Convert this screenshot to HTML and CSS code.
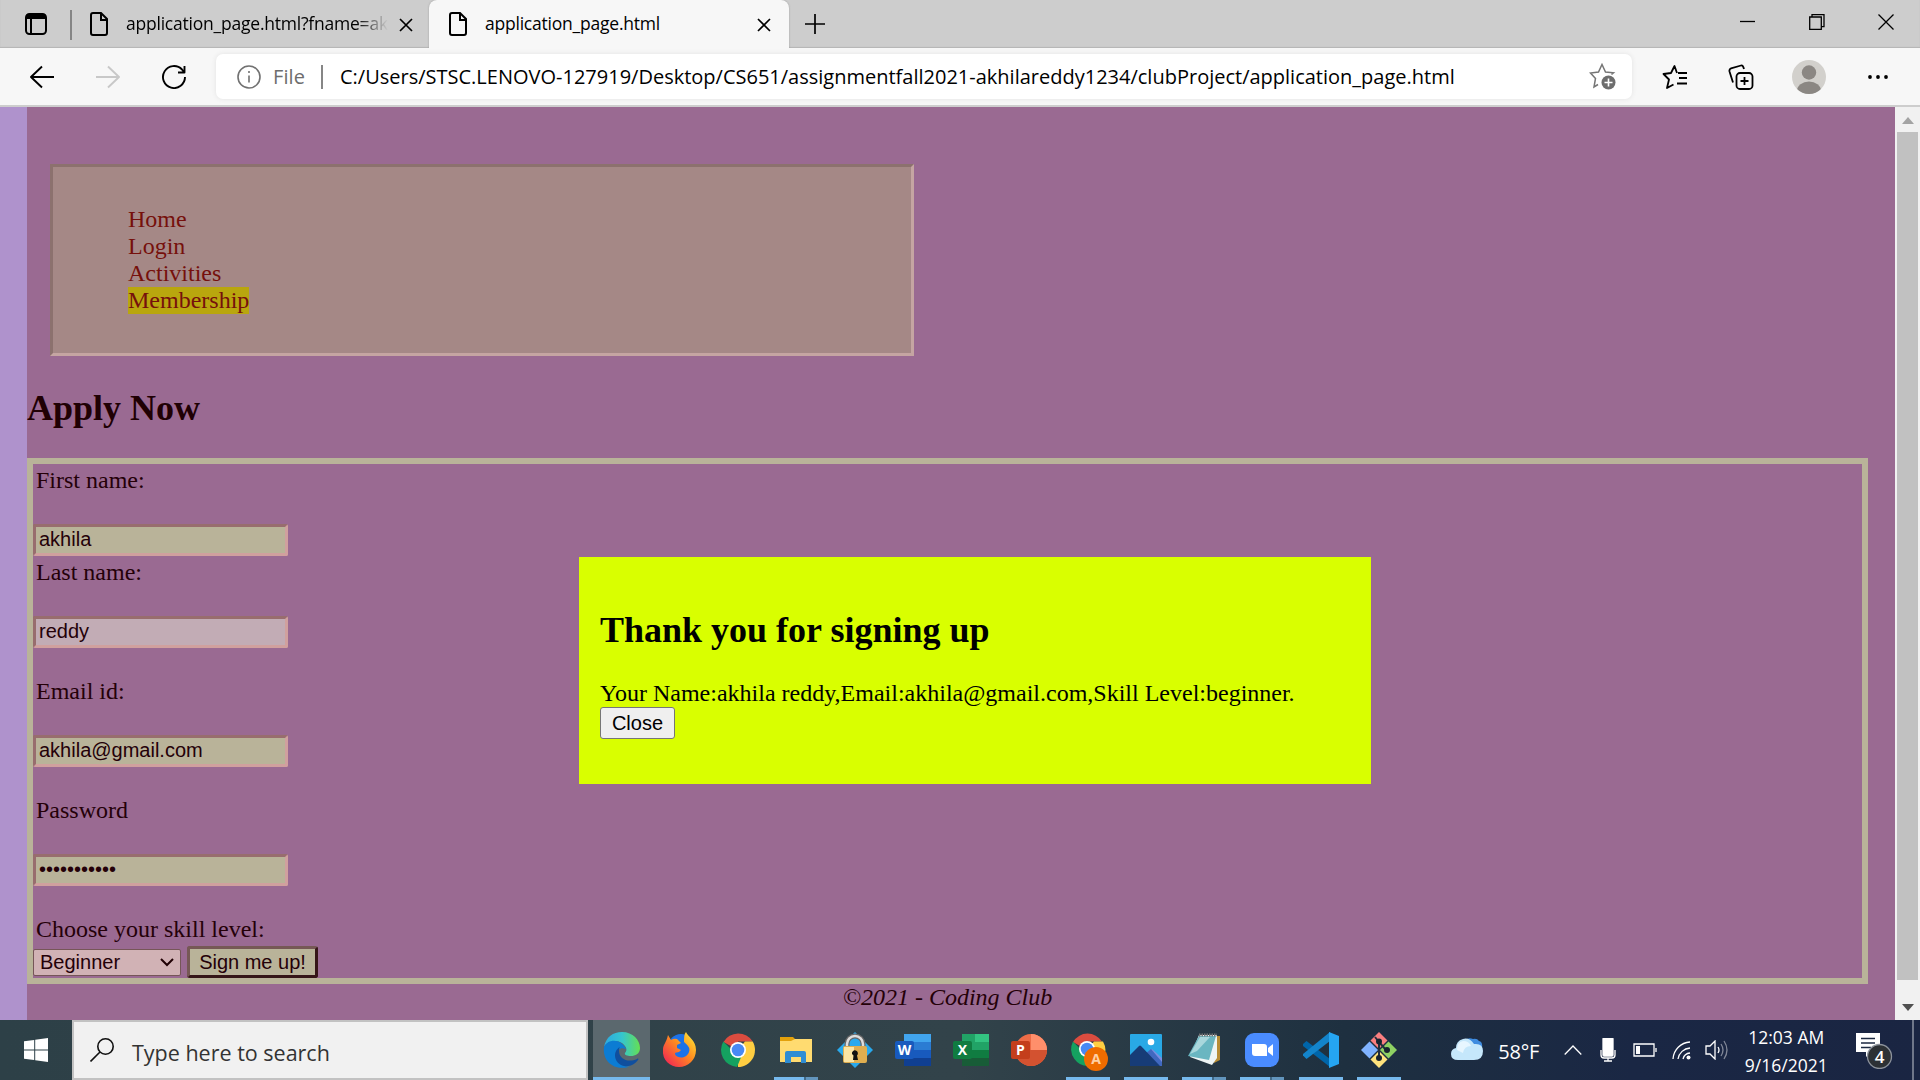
FILE: index.html
```html
<!DOCTYPE html>
<html lang="en">
<head>
<meta charset="utf-8">
<title>application_page.html</title>
<link rel="stylesheet" href="styles.css">
</head>
<body>
<header class="tabs">
  <svg class="panel-icon" width="22" height="22" viewBox="0 0 22 22"><rect x="1" y="1" width="20" height="20" rx="3.5" fill="none" stroke="#000" stroke-width="2"/><path d="M1 6V4a3 3 0 0 1 3-3h14a3 3 0 0 1 3 3v2z"/><path d="M6 5v16" stroke="#000" stroke-width="2"/></svg>
  <span class="tab-divider"></span>
  <div class="tab tab-back">
    <svg class="doc" viewBox="0 0 18 24"><path d="M3 1h8l6 6v14q0 2-2 2H3q-2 0-2-2V3q0-2 2-2zM11 1v7h6"/></svg>
    <span class="tab-title faded">application_page.html?fname=ak</span>
    <svg class="x" viewBox="0 0 14 14"><path d="M1 1l12 12M13 1L1 13"/></svg>
  </div>
  <div class="tab tab-active">
    <svg class="doc" viewBox="0 0 18 24"><path d="M3 1h8l6 6v14q0 2-2 2H3q-2 0-2-2V3q0-2 2-2zM11 1v7h6"/></svg>
    <span class="tab-title">application_page.html</span>
    <svg class="x" viewBox="0 0 14 14"><path d="M1 1l12 12M13 1L1 13"/></svg>
  </div>
  <svg class="plus" viewBox="0 0 22 22"><path d="M11 1v20M1 11h20"/></svg>
  <div class="window-controls">
    <svg viewBox="0 0 16 16"><path d="M0 7.500h15"/></svg>
    <svg viewBox="0 0 16 16"><path d="M.7 3h11.600v12.300H.7zM3 3V.7h12v12h-2.500"/></svg>
    <svg viewBox="0 0 16 16"><path d="M.5.5l15 15M15.500.5l-15 15"/></svg>
  </div>
</header>
<div class="toolbar">
  <div class="nav-buttons">
    <svg viewBox="0 0 24 24"><path d="M24 12H1M12 1.500L1 12l11 10.500"/></svg>
    <svg class="disabled" viewBox="0 0 24 24"><path d="M0 12h23M12 1.500L23 12 12 22.500"/></svg>
    <svg viewBox="0 0 24 24"><path d="M23 12A11 11 0 1 1 20 4.500l2 2.500M22.500 1v6.500H16"/></svg>
  </div>
  <div class="address">
    <svg class="info" viewBox="0 0 24 24"><circle cx="12" cy="12" r="11"/><path d="M12 10.500v7M12 6v2"/></svg>
    <span class="scheme">File</span><span class="address-divider"></span>
    <span class="url">C:/Users/STSC.LENOVO-127919/Desktop/CS651/assignmentfall2021-akhilareddy1234/clubProject/application_page.html</span>
    <svg class="add-star" viewBox="0 0 27 27"><path d="M9 21.500L5 24l1.500-8.500L1.500 10l8-1L13 1.500 16.500 9l8 .8-2 1.700"/><circle class="badge" cx="19.500" cy="19.500" r="7"/><path class="badge-plus" d="M19.500 15.500v8M15.500 19.500h8"/></svg>
  </div>
  <div class="tools">
    <svg viewBox="0 0 26 26"><path d="M15 9L12.500 2 9 9l-7.500 1L7 15.500 5 24l6.500-3.500M16 9h9M17 14h8M15 19.500h10"/></svg>
    <svg viewBox="0 0 26 26"><path d="M5 18.500L1.500 7.500Q1 5 3 4.300L13 1.500q2-.5 3 3.500"/><rect x="8.500" y="9" width="16" height="16" rx="3.500"/><path d="M16.500 13v8M12.500 17h8"/></svg>
    <svg class="avatar" viewBox="0 0 34 34"><defs><clipPath id="face"><circle cx="17" cy="17" r="17"/></clipPath></defs><g clip-path="url(#face)"><path fill="#d2d0cc" d="M0 0h34v34H0z"/><circle cx="17" cy="12.500" r="7.200" fill="#8b8783"/><ellipse cx="17" cy="31" rx="12" ry="9.500" fill="#8b8783"/></g></svg>
    <svg viewBox="0 0 26 26"><g fill="#000" stroke="none"><circle cx="5" cy="13" r="1.900"/><circle cx="13" cy="13" r="1.900"/><circle cx="21" cy="13" r="1.900"/></g></svg>
  </div>
</div>
<div class="viewport">
  <main class="page">
    <ul class="site-nav">
      <li><a>Home</a></li><li><a>Login</a></li><li><a>Activities</a></li><li><a class="current">Membership</a></li>
    </ul>
    <h2 class="title">Apply Now</h2>
    <form class="form">
      <label>First name:</label>
      <div class="field">akhila</div>
      <label>Last name:</label>
      <div class="field field-plain">reddy</div>
      <label class="spaced">Email id:</label>
      <div class="field">akhila@gmail.com</div>
      <label class="spaced">Password</label>
      <div class="field">•••••••••••</div>
      <label class="spaced skill">Choose your skill level:</label>
      <div class="actions">
        <div class="select">Beginner<svg viewBox="0 0 14 9"><path d="M1 1l6 6 6-6"/></svg></div>
        <div class="submit">Sign me up!</div>
      </div>
    </form>
    <footer class="footer">©2021 - Coding Club</footer>
  </main>
  <div class="scrollbar">
    <svg viewBox="0 0 12 7"><path fill="#a3a3a3" d="M6 0l6 7H0z"/></svg>
    <div class="thumb"></div>
    <svg viewBox="0 0 12 7"><path fill="#505050" d="M0 0h12L6 7z"/></svg>
  </div>
  <section class="modal">
    <h2>Thank you for signing up</h2>
    <p>Your Name:akhila reddy,Email:akhila@gmail.com,Skill Level:beginner.</p>
    <div class="close">Close</div>
  </section>
</div>
<div class="taskbar">
  <div class="start"><svg viewBox="0 0 24 24"><path fill="#fff" d="M0 3.300L10.200 2v9.500H0zM11.200 1.800L24 0v11.500H11.200zM0 12.500h10.200V22L0 20.700zM11.200 12.500H24V24l-12.800-1.800z"/></svg></div>
  <div class="search"><svg viewBox="0 0 24 24"><circle cx="15.500" cy="8.500" r="7.700"/><path d="M10 14L.5 23.500"/></svg><span>Type here to search</span></div>
  <div class="apps">
    <div class="app focused"><svg viewBox="0 0 36 36"><defs><linearGradient id="eg" x1="0" x2="1"><stop offset="0" stop-color="#2da9e0"/><stop offset=".5" stop-color="#35c5cf"/><stop offset="1" stop-color="#65df52"/></linearGradient></defs><path fill="url(#eg)" d="M0 15C2 5 9 0 18 0c11 0 18 8 18 16 0 6-5 8-9 8-4 0-7-1-6-3 3-3 1-7-3-10C12 7 3 9 0 15z"/><path fill="#0c7cd3" d="M0 15c3-7 12-8 17-4 3 2 5 5 5 6-9-4-13 8-5 15 4 3 8 3 10 2C13 40-2 31 0 15z"/><path fill="#104f9e" d="M16 15c-8 4-6 17 4 19 6 1 11-2 14-6 1-1 0-2-1-1-9 4-18 0-18-8 0-2 0-3 1-4z"/></svg></div>
    <div class="app"><svg viewBox="0 0 36 36"><defs><linearGradient id="ff" x1="1" y1="0" x2="0" y2="1"><stop offset="0" stop-color="#fff236"/><stop offset=".45" stop-color="#ff8b20"/><stop offset="1" stop-color="#f0145c"/></linearGradient></defs><circle cx="19" cy="15" r="13" fill="#1c72e8"/><path fill="url(#ff)" d="M6 3l3 5q3-2 6-1l4 4-4 2v3l4 2c-3 4-6 1-6 4 1 4 11 6 14-2 2-5-3-8-5-10 0-4 0-8 2-10 2 5 10 8 10 18 0 10-8 17-17 17S0 28 1 18c0-6 3-6 5-15z"/></svg></div>
    <div class="app"><svg viewBox="0 0 36 36"><path fill="#db4c3f" d="M18 18L3.500 10A17 17 0 0 1 32.700 9.500H18z"/><path fill="#ffce42" d="M18 18l7-8.500h7.700A17 17 0 0 1 18 35z"/><path fill="#15a160" d="M3.300 9.500L18 24l4-1-5 12A17 17 0 0 1 3.300 9.500z"/><circle cx="18" cy="18" r="8" fill="#fff"/><circle cx="18" cy="18" r="6.300" fill="#4889f4"/></svg></div>
    <div class="app split"><svg viewBox="0 0 36 36"><path fill="#e3a10b" d="M2 5h13l3 3v5H2z"/><path fill="#ffdb70" d="M2 9h11l4-2h17v23H2z"/><path fill="#2f8dd4" d="M7 31V21q0-2 2-2h17q2 0 2 2v10h-5v-6H13v6z"/></svg></div>
    <div class="app"><svg viewBox="0 0 36 36"><path fill="#29a9ed" d="M18 0l18 18-18 18L0 18z"/><path d="M10 16V12a8 8 0 0 1 16 0v4" fill="none" stroke="#666" stroke-width="5"/><path d="M10 16V12a8 8 0 0 1 16 0v4" fill="none" stroke="#ddd" stroke-width="2.500"/><rect x="6" y="14" width="24" height="17" rx="2" fill="#dfae50"/><path fill="#fbe5a3" d="M7 15h10v15H7z"/><path fill="#111" d="M15 22a3 3 0 1 1 5 1.500l1 4.500h-5l.500-4.500z"/></svg></div>
    <div class="app"><svg viewBox="0 0 36 36"><path fill="#41a5ee" d="M9 2h27v8H9z"/><path fill="#2b7cd3" d="M9 10h27v8H9z"/><path fill="#185abd" d="M9 18h27v8H9z"/><path fill="#103f91" d="M9 26h27v8H9z"/><rect y="9" width="19" height="18" rx="2" fill="#185abd"/><text x="9.500" y="23" class="glyph">W</text></svg></div>
    <div class="app"><svg viewBox="0 0 36 36"><path fill="#21a366" d="M9 2h27v32H9z"/><path fill="#33c481" d="M22 2h14v8H22z"/><path fill="#107c41" d="M9 18h27v8H9z"/><path fill="#185c37" d="M9 26h27v8H9z"/><rect y="9" width="19" height="18" rx="2" fill="#107c41"/><text x="9.500" y="23" class="glyph">X</text></svg></div>
    <div class="app"><svg viewBox="0 0 36 36"><circle cx="20" cy="18" r="16" fill="#ed6c47"/><path fill="#ff8f6b" d="M20 2a16 16 0 0 1 16 16H20z"/><path fill="#d35230" d="M4 18h32a16 16 0 0 1-32 0z"/><rect y="9" width="19" height="18" rx="2" fill="#c43e1c"/><text x="9.500" y="23" class="glyph">P</text></svg></div>
    <div class="app open"><svg viewBox="0 0 36 36"><path fill="#db4c3f" d="M17 18L3 10A17 17 0 0 1 32 9.500H17z"/><path fill="#ffce42" d="M17 18l7-8.500h9A17 17 0 0 1 17 35z"/><path fill="#15a160" d="M3 9.500L17 24l3 10A17 17 0 0 1 3 9.500z"/><circle cx="17" cy="17" r="8" fill="#fff"/><circle cx="17" cy="17" r="6.300" fill="#4889f4"/><circle cx="26" cy="27" r="12" fill="#ef6c00"/><text x="26" y="32" class="glyph soft">A</text></svg></div>
    <div class="app open"><svg viewBox="0 0 36 36"><rect x="2" y="2" width="32" height="32" rx="1" fill="#29a9e6"/><path fill="#7b8ee0" d="M18 24l6-7 10 9v8H18z"/><path fill="#4068c0" d="M17 22l6-5 11 13v4H17z"/><path fill="#173c77" d="M2 23l9-9q1-1 2 0l19 20H2z"/><circle cx="23" cy="10" r="3.300" fill="#fff"/></svg></div>
    <div class="app split"><svg viewBox="0 0 36 36"><path fill="#b78d36" d="M28 4h6v24l-6 3z"/><path fill="#eef5f5" d="M13 3h18v23l-5 7-22-8z"/><path fill="#6ab6c1" d="M13 4h17l-7 24-21-4z"/><path fill="#a9d7dc" d="M14 5h10L11 19l-7 3z"/><path d="M13 3h18" stroke="#777" stroke-width="3" stroke-dasharray="1.500 1"/></svg></div>
    <div class="app split"><svg viewBox="0 0 36 36"><rect x="1" y="1" width="34" height="34" rx="9" fill="#4a8cff"/><path fill="#fff" d="M8 12h12q3 0 3 3v9H11q-3 0-3-3zM24 16l5-4v12l-5-4z"/></svg></div>
    <div class="app open"><svg viewBox="0 0 36 36"><path fill="#0065a9" d="M0 12l3.500-3L27 27v8L0 14z"/><path fill="#1384cb" d="M0 23.500L3.500 27 27 9V0L0 22z"/><path fill="#25a5f2" d="M26 0l10 4v28l-10 4z"/></svg></div>
    <div class="app open"><svg viewBox="0 0 36 36"><path fill="#fa7f80" d="M18 0l8.500 8.500L18 17 9.500 8.500z"/><path fill="#8ed163" d="M27.500 9.500L36 18l-8.500 8.500L19 18z"/><path fill="#ffe37d" d="M18 19l8.500 8.500L18 36l-8.500-8.500z"/><path fill="#80b3ff" d="M8.500 9.500L17 18l-8.500 8.500L0 18z"/><path d="M14 5l4 5v16M18 10l7 8" stroke="#222f3d" stroke-width="2" fill="none"/><g fill="#182430"><circle cx="18" cy="9.500" r="3"/><circle cx="18" cy="26" r="3"/><circle cx="26" cy="18" r="3"/></g></svg></div>
  </div>
  <div class="tray">
    <svg class="cloud" viewBox="0 0 32 22"><path fill="#3f8ce0" d="M13 3Q17-1 22 1q4-1 6 2 4 1 3 7H14z"/><path fill="#c5e7fb" d="M7 22Q0 22 0 16q0-5 5-6 0-7 7-9 6-2 11 5 9-1 9 7 0 9-9 9z"/><path fill="#e7f6ff" d="M6 12q0-8 6-9 6 0 8 5-7 0-8 7z"/></svg>
    <span class="weather">58°F</span>
    <svg class="chevron" viewBox="0 0 18 10"><path d="M.7 9.500L9 1l8.300 8.500"/></svg>
    <svg class="mic" viewBox="0 0 16 24"><rect x="3" width="10" height="18" rx="1" fill="#fff"/><path d="M1 12v5q0 3 3 3h8q3 0 3-3v-5M8 20v3M4 23h8"/></svg>
    <svg class="battery" viewBox="0 0 24 14"><path d="M1 1h20v12H1zM23 5v4"/><path fill="#fff" stroke="none" d="M3 3h4v8H3z"/></svg>
    <svg class="wifi" viewBox="0 0 19 19"><path d="M1 18A18 18 0 0 1 18 1M6 18A13 13 0 0 1 18 7M11 18a8 8 0 0 1 7-6"/><circle cx="16.500" cy="16.500" r="2" fill="#fff" stroke="none"/></svg>
    <svg class="sound" viewBox="0 0 24 20"><path d="M1 6h4l5-5v18l-5-5H1zM13 7q2 3 0 6"/><path opacity=".45" d="M16 4q4 6 0 12M19 1q6 9 0 18"/></svg>
    <div class="clock"><span>12:03 AM</span><span>9/16/2021</span></div>
    <svg class="notify" viewBox="0 0 37 37"><path fill="#fff" d="M0 1h24v19H15l-5 5v-5H0z"/><path d="M5 6.500h14M5 11h14M5 15.500h10" stroke="#1c2941" stroke-width="1.300"/><circle cx="23.500" cy="24.500" r="12" fill="#2d3135" stroke="#8d939c"/><text x="23.500" y="31" class="count">4</text></svg>
  </div>
</div>
</body>
</html>
```
FILE: styles.css
```css
* { box-sizing: border-box; }
body { margin: 0; width: 1920px; height: 1080px; overflow: hidden; display: flex; flex-direction: column; font-family: "Open Sans", "Noto Sans", sans-serif; }
svg { display: block; flex: none; fill: none; }
.nav-buttons, .tools { stroke-linejoin: round; }
.tabs { height: 48px; flex: none; display: flex; align-items: center; background: #cdcdcd; box-shadow: inset 0 -1px 1px #b5b5b5; }
.panel-icon { margin-left: 25px; margin-top: -1px; }
.panel-icon path { fill: #000; }
.tab-divider { width: 2px; height: 30px; margin: 2px 18px 0 23px; background: #858585; }
.tab { display: flex; align-items: center; height: 48px; }
.tab-back { width: 339px; }
.doc { width: 18px; height: 24px; stroke: #000; stroke-width: 2; }
.tab-title { width: 262px; margin: -2px 11px 0 18px; font-size: 17.500px; letter-spacing: -0.220px; white-space: nowrap; overflow: hidden; line-height: 24px; }
.faded { -webkit-mask-image: linear-gradient(90deg, #000 88%, transparent); mask-image: linear-gradient(90deg, #000 88%, transparent); }
.x { width: 14px; height: 14px; stroke: #000; stroke-width: 1.700; margin-top: 2px; }
.tab-active { width: 360px; padding-left: 20px; background: #f7f7f7; border-radius: 8px 8px 0 0; box-shadow: 0 0 2px #999; }
.tab-active .x { margin-left: auto; margin-right: 18px; }
.plus { width: 22px; height: 22px; margin-left: 15px; margin-top: -1px; stroke: #000; stroke-width: 1.700; }
.window-controls { display: flex; gap: 53px; margin-left: auto; margin-right: 26px; margin-top: -5px; }
.window-controls svg { width: 16px; height: 16px; stroke: #000; stroke-width: 1.300; }
.toolbar { height: 59px; flex: none; display: flex; align-items: center; background: #f7f7f7; border-bottom: 2px solid #cdcdcd; }
.nav-buttons { display: flex; gap: 42px; padding-left: 30px; width: 216px; flex: none; }
.nav-buttons svg { width: 24px; height: 24px; stroke: #000; stroke-width: 1.900; }
.nav-buttons .disabled { stroke: #c8c8c8; }
.address { width: 1416px; height: 45px; flex: none; display: flex; align-items: center; padding: 0 16px 0 21px; background: #fff; border-radius: 7px; box-shadow: 0 0 5px #e2e2e2; }
.info { width: 24px; height: 24px; stroke: #717171; stroke-width: 1.600; }
.scheme { width: 48px; margin-left: 12px; color: #6d6d6d; font-size: 20px; letter-spacing: 0.100px; }
.address-divider { width: 2px; height: 24px; background: #868686; margin-right: 17px; }
.url { width: 1120px; font-size: 20px; white-space: nowrap; letter-spacing: 0; }
.add-star { width: 27px; height: 27px; margin-left: auto; stroke: #757575; stroke-width: 1.500; }
.badge { fill: #6d6d6d; stroke: none; }
.badge-plus { stroke: #fff; stroke-width: 1.600; }
.tools { flex: 1; display: flex; align-items: center; padding-left: 30px; }
.tools svg { width: 26px; height: 26px; stroke: #000; stroke-width: 1.800; margin-right: 40px; }
.tools .avatar { width: 34px; height: 34px; stroke: none; margin-right: 39px; margin-left: -2px; }
.tools svg:last-child { margin-right: 0; }
.viewport { position: relative; height: 913px; flex: none; display: flex; background: #af92cc; padding-left: 27px; overflow: hidden; }
.page { flex: 1; background: #9a6a92; padding-top: 57px; font: 24px/27px "Liberation Serif", serif; color: #240008; }
.site-nav { width: 864px; height: 192px; margin: 0 0 0 23px; padding: 39px 75px; list-style: none; background: #a58886; border: 3px solid; border-color: #8c716e #c5a5a2 #c5a5a2 #8c716e; color: #76100c; }
.site-nav a { display: block; width: max-content; }
.current { background: #b9a60e; }
.title { margin: 31px 0 29px; font-size: 36px; line-height: 42px; color: #200004; }
.form { width: 1841px; height: 526px; border: 6px solid #b9b399; padding-top: 3px; }
.form label { display: block; margin-left: 3px; height: 57px; }
.form .spaced { margin-top: 30px; }
.form .skill { height: 30px; }
.field { width: 255px; height: 32px; margin-bottom: 3px; padding: 0 3px; background: #b9b399; border: 3px solid; border-color: #986d6e #d0a09e #d0a09e #986d6e; border-radius: 2px; font: 20px/25px "Liberation Sans", sans-serif; }
.field-plain { background: #c2acb5; }
.actions { display: flex; align-items: center; gap: 6px; font: 20px/24px "Liberation Sans", sans-serif; }
.select { display: flex; align-items: center; justify-content: space-between; width: 148px; height: 27px; padding: 0 6px; background: #d1b2b5; border: 1px solid #765658; border-radius: 2px; }
.select svg { width: 14px; height: 9px; stroke: #200004; stroke-width: 2; }
.submit { width: 131px; height: 32px; text-align: center; line-height: 26px; background: #b9b399; border: 3px solid; border-color: #765855 #361618 #361618 #765855; border-radius: 3px; }
.footer { width: 1841px; text-align: center; font-style: italic; }
.scrollbar { width: 25px; display: flex; flex-direction: column; align-items: center; background: #f1f1f1; padding: 10px 0 9px; }
.scrollbar svg { width: 12px; height: 7px; }
.thumb { width: 21px; height: 848px; margin: 8px 0 24px; background: #c1c1c1; flex: none; }
.modal { position: absolute; left: 579px; top: 450px; width: 792px; height: 227px; padding: 21px; background: #d9ff00; color: #000; font: 24px/27px "Liberation Serif", serif; }
.modal h2 { margin: 31px 0 29px; font-size: 36px; line-height: 42px; }
.modal p { margin: 0; white-space: nowrap; }
.close { width: 75px; height: 32px; border: 1px solid #767676; border-radius: 3px; background: #efefef; font: 20px/30px "Liberation Sans", sans-serif; text-align: center; }
.taskbar { height: 60px; display: flex; background: linear-gradient(90deg, #2d4047 0, #32434a 50%, #1e3040 70%, #1a2744 85%, #1a2542); }
.start { width: 72px; padding: 18px 0 0 24px; }
.start svg { width: 24px; height: 24px; }
.search { width: 516px; display: flex; align-items: center; gap: 18px; padding-left: 16px; background: #f1f1f1; border: 2px solid #c2c2c2; color: #333; font-size: 21.500px; letter-spacing: 0; white-space: nowrap; }
.search svg { width: 24px; height: 24px; stroke: #111; stroke-width: 1.600; }
.search span { margin-top: 4px; }
.apps { display: flex; padding-left: 5px; gap: 1.250px; }
.app { width: 57px; height: 60px; display: flex; align-items: center; justify-content: center; }
.app svg { width: 36px; height: 36px; overflow: visible; }
.focused { background: #5b686e; box-shadow: inset 0 -3px #76b9ed; }
.open { background: linear-gradient(#76b9ed, #76b9ed) 50% 100% / 44px 3px no-repeat; }
.split { background: linear-gradient(90deg, #76b9ed 0 30px, #426a88 30px 32px, #6295bd 32px) 50% 100% / 44px 3px no-repeat; }
.glyph { fill: #fff; font: bold 14px "Open Sans", sans-serif; text-anchor: middle; }
.soft { fill: #ffd0a5; }
.tray { flex: 1; display: flex; align-items: center; color: #fff; }
.tray svg { stroke: #fff; stroke-width: 1.300; }
.tray .cloud { width: 32px; height: 22px; stroke: none; margin-left: 44px; margin-top: -2px; }
.weather { width: 54px; margin: 3px 0 0 15px; font-size: 20px; letter-spacing: -0.200px; white-space: nowrap; }
.chevron { width: 18px; height: 10px; margin-left: 12px; }
.mic { width: 16px; height: 24px; margin-left: 18px; }
.battery { width: 24px; height: 14px; margin-left: 17px; }
.wifi { width: 19px; height: 19px; margin-left: 15px; }
.sound { width: 24px; height: 20px; margin-left: 14px; }
.clock { width: 86px; margin: 1px 0 0 14px; display: flex; flex-direction: column; align-items: center; font-size: 17.500px; line-height: 28px; letter-spacing: 0; white-space: nowrap; }
.tray .notify { width: 37px; height: 37px; margin-left: 27px; stroke: none; }
.count { fill: #fff; font: 600 17px "Open Sans", sans-serif; text-anchor: middle; }
.tray::after { content: ""; width: 2px; height: 60px; background: #6f7789; margin-left: auto; margin-right: 6px; }
```
